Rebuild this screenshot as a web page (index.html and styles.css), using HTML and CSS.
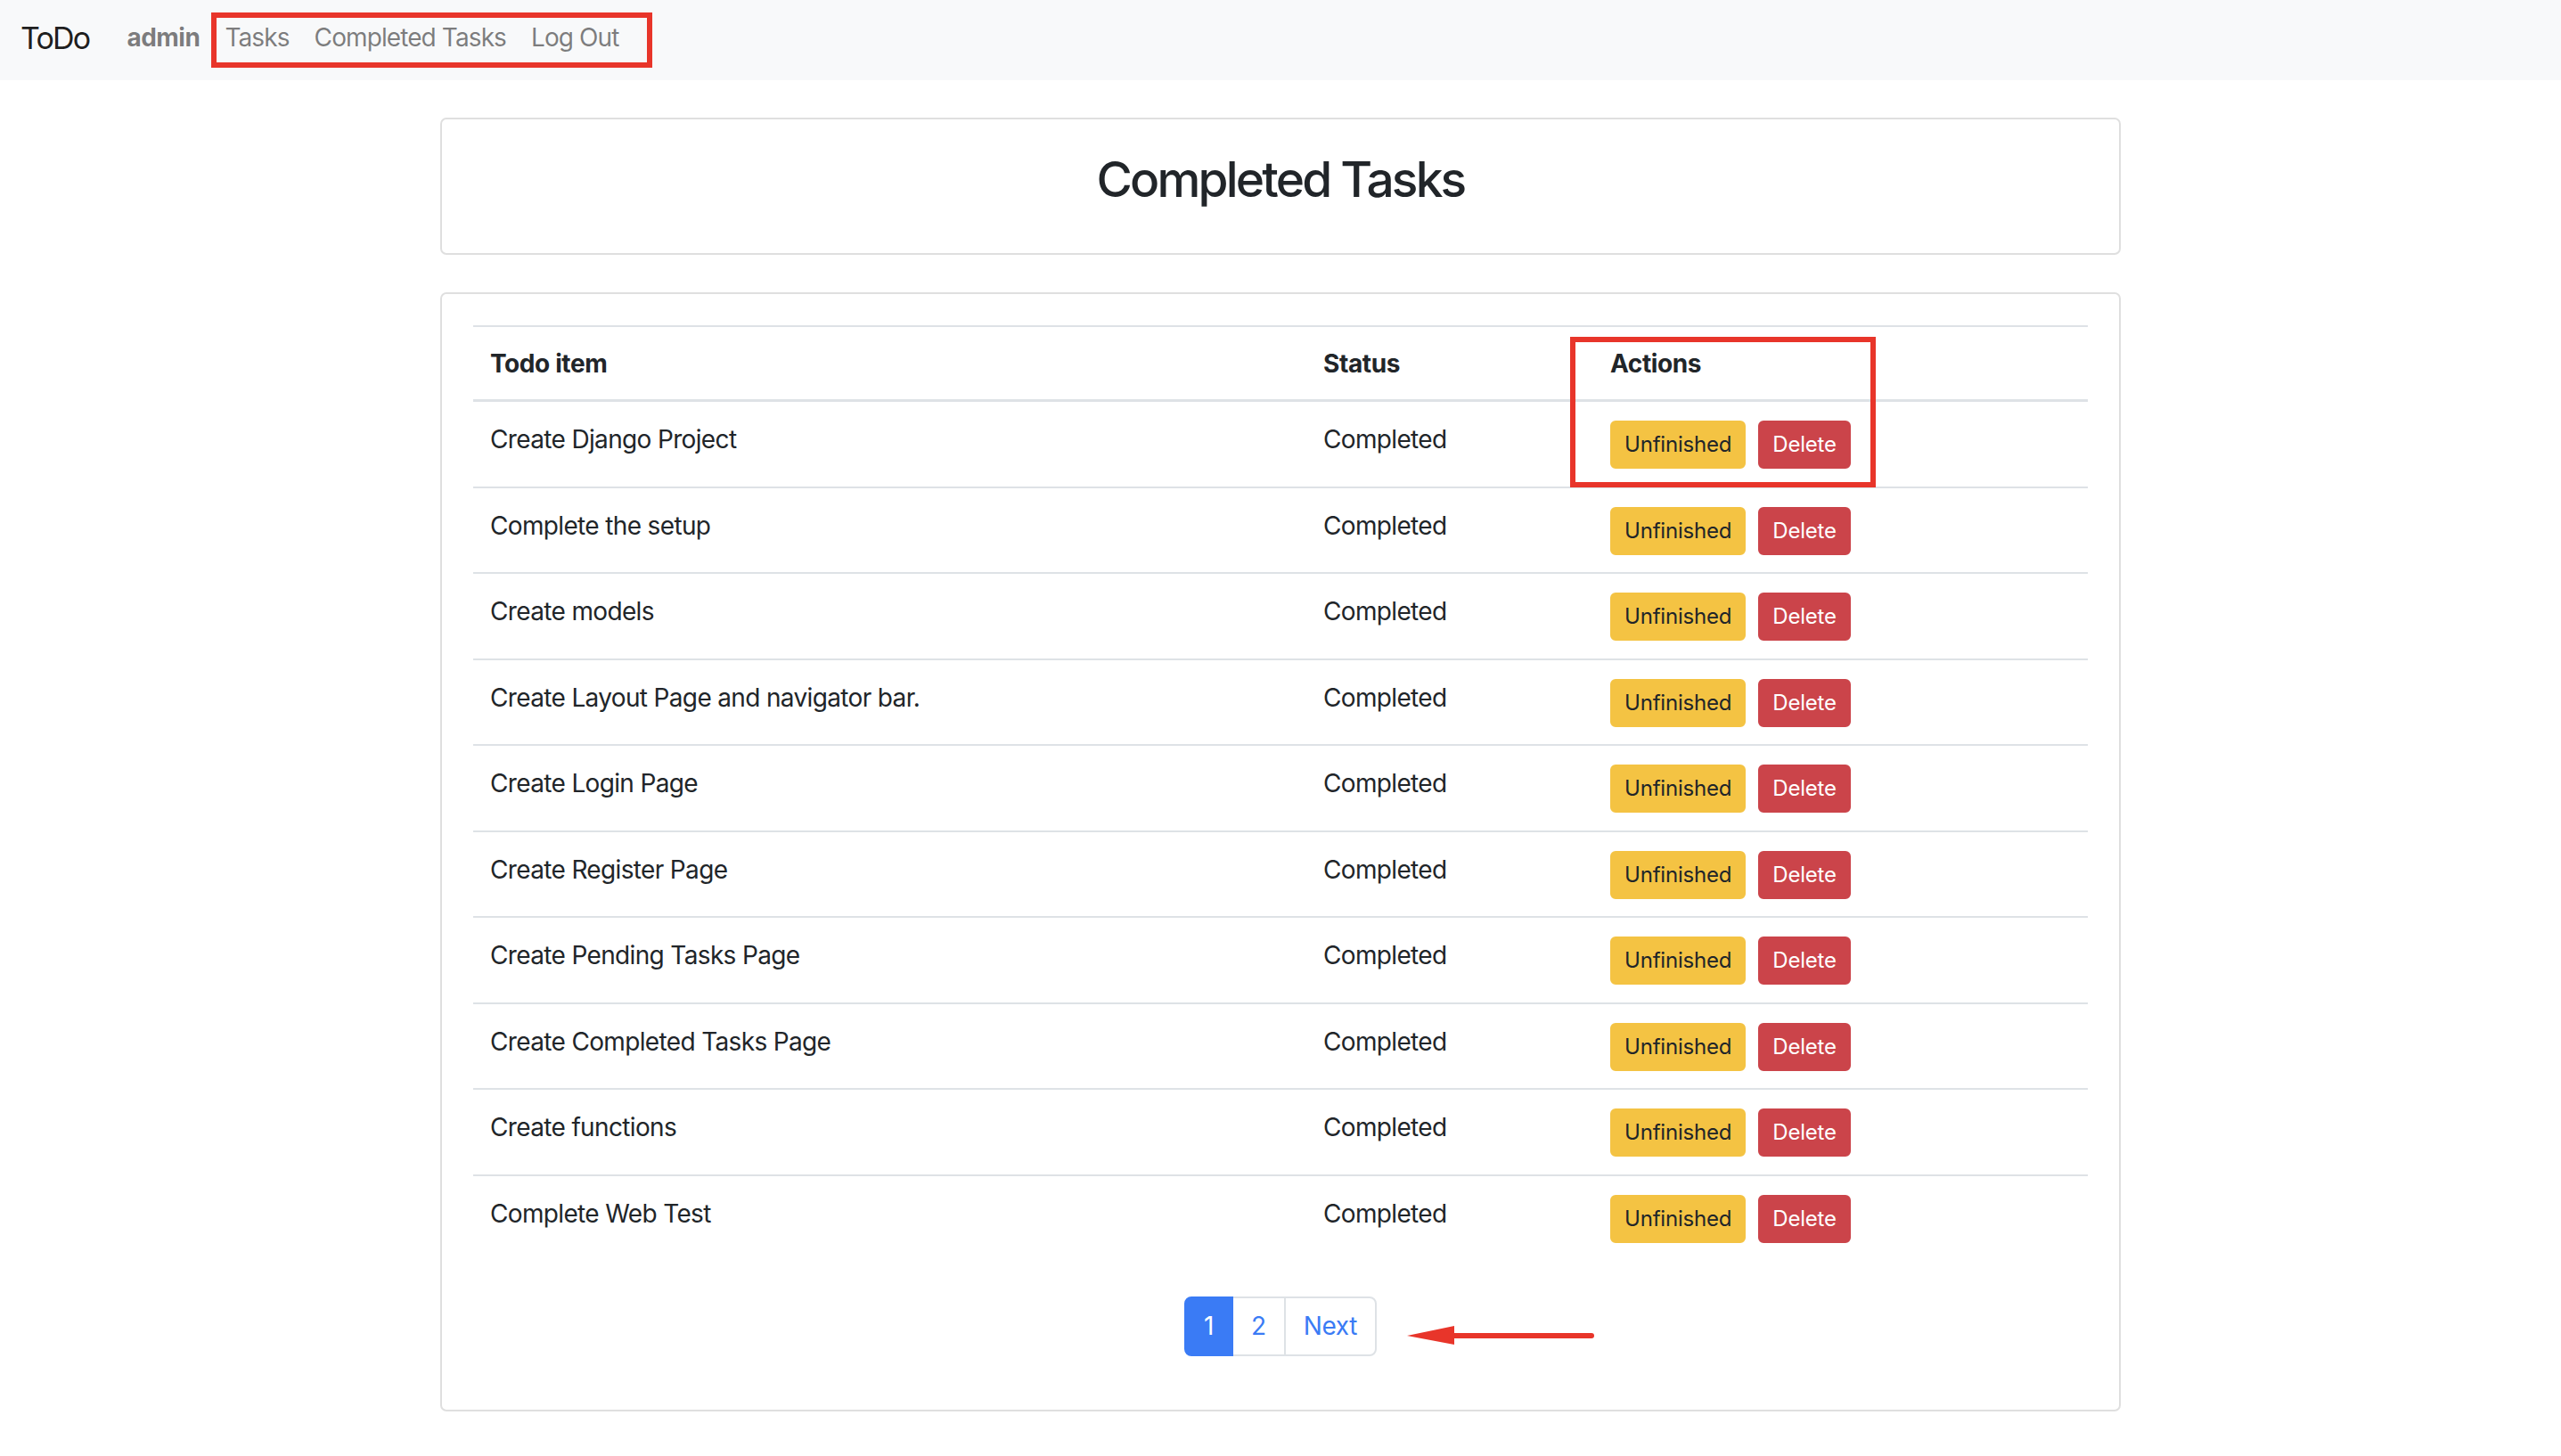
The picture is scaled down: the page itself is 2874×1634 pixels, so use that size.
FILE: index.html
```html
<!DOCTYPE html>
<html lang="en">
<head>
<meta charset="utf-8">
<title>ToDo - Completed Tasks</title>
<link rel="stylesheet" href="styles.css">
</head>
<body>
<nav class="navbar">
  <a class="brand" href="#">ToDo</a>
  <ul class="nav">
    <li><a class="nav-link user" href="#">admin</a></li>
    <li><a class="nav-link" href="#">Tasks</a></li>
    <li><a class="nav-link" href="#">Completed Tasks</a></li>
    <li><a class="nav-link" href="#">Log Out</a></li>
  </ul>
</nav>

<main class="container">
  <section class="card title-card">
    <div class="card-body">
      <h2 class="page-title">Completed Tasks</h2>
    </div>
  </section>

  <section class="card list-card">
    <div class="card-body">
      <table class="table">
        <thead>
          <tr><th class="col-item">Todo item</th><th class="col-status">Status</th><th class="col-actions">Actions</th></tr>
        </thead>
        <tbody>
          <tr><td>Create Django Project</td><td>Completed</td><td><a class="btn btn-warning" href="#">Unfinished</a><a class="btn btn-danger" href="#">Delete</a></td></tr>
          <tr><td>Complete the setup</td><td>Completed</td><td><a class="btn btn-warning" href="#">Unfinished</a><a class="btn btn-danger" href="#">Delete</a></td></tr>
          <tr><td>Create models</td><td>Completed</td><td><a class="btn btn-warning" href="#">Unfinished</a><a class="btn btn-danger" href="#">Delete</a></td></tr>
          <tr><td>Create Layout Page and navigator bar.</td><td>Completed</td><td><a class="btn btn-warning" href="#">Unfinished</a><a class="btn btn-danger" href="#">Delete</a></td></tr>
          <tr><td>Create Login Page</td><td>Completed</td><td><a class="btn btn-warning" href="#">Unfinished</a><a class="btn btn-danger" href="#">Delete</a></td></tr>
          <tr><td>Create Register Page</td><td>Completed</td><td><a class="btn btn-warning" href="#">Unfinished</a><a class="btn btn-danger" href="#">Delete</a></td></tr>
          <tr><td>Create Pending Tasks Page</td><td>Completed</td><td><a class="btn btn-warning" href="#">Unfinished</a><a class="btn btn-danger" href="#">Delete</a></td></tr>
          <tr><td>Create Completed Tasks Page</td><td>Completed</td><td><a class="btn btn-warning" href="#">Unfinished</a><a class="btn btn-danger" href="#">Delete</a></td></tr>
          <tr><td>Create functions</td><td>Completed</td><td><a class="btn btn-warning" href="#">Unfinished</a><a class="btn btn-danger" href="#">Delete</a></td></tr>
          <tr><td>Complete Web Test</td><td>Completed</td><td><a class="btn btn-warning" href="#">Unfinished</a><a class="btn btn-danger" href="#">Delete</a></td></tr>
        </tbody>
      </table>
      <ul class="pagination">
        <li class="page-item active"><a class="page-link" href="#">1</a></li>
        <li class="page-item"><a class="page-link" href="#">2</a></li>
        <li class="page-item"><a class="page-link" href="#">Next</a></li>
      </ul>
    </div>
  </section>
</main>

<div class="mark mark-nav"></div>
<div class="mark mark-actions"></div>
<svg class="mark-arrow" width="220" height="30" viewBox="0 0 220 30" aria-hidden="true">
  <line x1="50" y1="14" x2="207" y2="14" stroke="#e8352a" stroke-width="6" stroke-linecap="round"/>
  <polygon points="0,14 53,3 53,24" fill="#e8352a"/>
</svg>
</body>
</html>
```

FILE: styles.css
```css
* { box-sizing: border-box; }

html, body {
  margin: 0;
  padding: 0;
}

body {
  position: relative;
  min-height: 1634px;
  background: #ffffff;
  color: #212529;
  font-family: "Inter", "Liberation Sans", sans-serif;
  font-size: 28px;
  line-height: 1.5;
}

a { text-decoration: none; }

/* ---------- navbar ---------- */
.navbar {
  display: flex;
  align-items: center;
  height: 90px;
  padding: 0 22px 6px 23px;
  background: #f8f9fa;
}

.brand {
  font-size: 34px;
  line-height: 1.5;
  color: rgba(0, 0, 0, 0.9);
  margin-right: 28px;
  letter-spacing: -1.8px;
}

.nav {
  display: flex;
  list-style: none;
  margin: 0;
  padding: 0;
}

.nav-link {
  display: block;
  padding: 0 14px;
  color: rgba(0, 0, 0, 0.5);
  font-size: 28px;
  letter-spacing: -0.9px;
}

.nav-link.user {
  font-weight: 700;
  letter-spacing: -0.5px;
}

/* ---------- layout ---------- */
.container {
  width: 1886px;
  margin: 42px auto 0;
}

.card {
  background: #fff;
  border: 2px solid #dfdfdf;
  border-radius: 7px;
}

.card-body {
  padding: 35px;
}

.title-card .card-body {
  padding: 34px 35px 36px;
}

.page-title {
  margin: 0 0 14px;
  text-align: center;
  font-size: 55px;
  font-weight: 500;
  line-height: 1.2;
  letter-spacing: -2.8px;
}

.list-card {
  margin-top: 42px;
}

/* ---------- table ---------- */
.table {
  width: 100%;
  border-collapse: collapse;
  margin-bottom: 41px;
  letter-spacing: -0.65px;
}

.table th,
.table td {
  padding: 21px 20px 19.5px 19px;
  text-align: left;
  vertical-align: top;
  border-top: 2px solid #dee2e6;
}

.table th {
  padding: 20px 20px 19px 19px;
  font-weight: 700;
  border-bottom: 3px solid #dee2e6;
  letter-spacing: -0.4px;
}

.col-item { width: 935px; }
.col-status { width: 322px; }

/* ---------- buttons ---------- */
.btn {
  display: inline-block;
  vertical-align: top;
  padding: 7px 14px;
  border: 2px solid transparent;
  border-radius: 6px;
  font-size: 24px;
  line-height: 1.5;
  letter-spacing: -0.2px;
}

.btn + .btn { margin-left: 14px; }

.btn-warning {
  background: #f4c343;
  border-color: #f4c343;
  color: #212529;
}

.btn-danger {
  background: #cb444a;
  border-color: #cb444a;
  color: #fff;
}

/* ---------- pagination ---------- */
.pagination {
  display: flex;
  justify-content: center;
  list-style: none;
  margin: 0 0 25px;
  padding: 0;
}

.page-link {
  display: block;
  padding: 14px 20px;
  margin-left: -2px;
  font-size: 28px;
  line-height: 1.25;
  color: #3a7bf5;
  background: #fff;
  border: 2px solid #dee2e6;
  letter-spacing: -0.4px;
}

.page-item:first-child .page-link {
  margin-left: 0;
  border-radius: 8px 0 0 8px;
}

.page-item:last-child .page-link {
  border-radius: 0 8px 8px 0;
}

.page-item.active .page-link {
  position: relative;
  z-index: 1;
  background: #3a7bf5;
  border-color: #3a7bf5;
  color: #fff;
}

/* ---------- annotations ---------- */
.mark {
  position: absolute;
  border: 6px solid #e8352a;
}

.mark-nav {
  left: 237px;
  top: 14px;
  width: 495px;
  height: 62px;
}

.mark-actions {
  left: 1762px;
  top: 378px;
  width: 343px;
  height: 169px;
}

.mark-arrow {
  position: absolute;
  left: 1579px;
  top: 1485px;
}
```
